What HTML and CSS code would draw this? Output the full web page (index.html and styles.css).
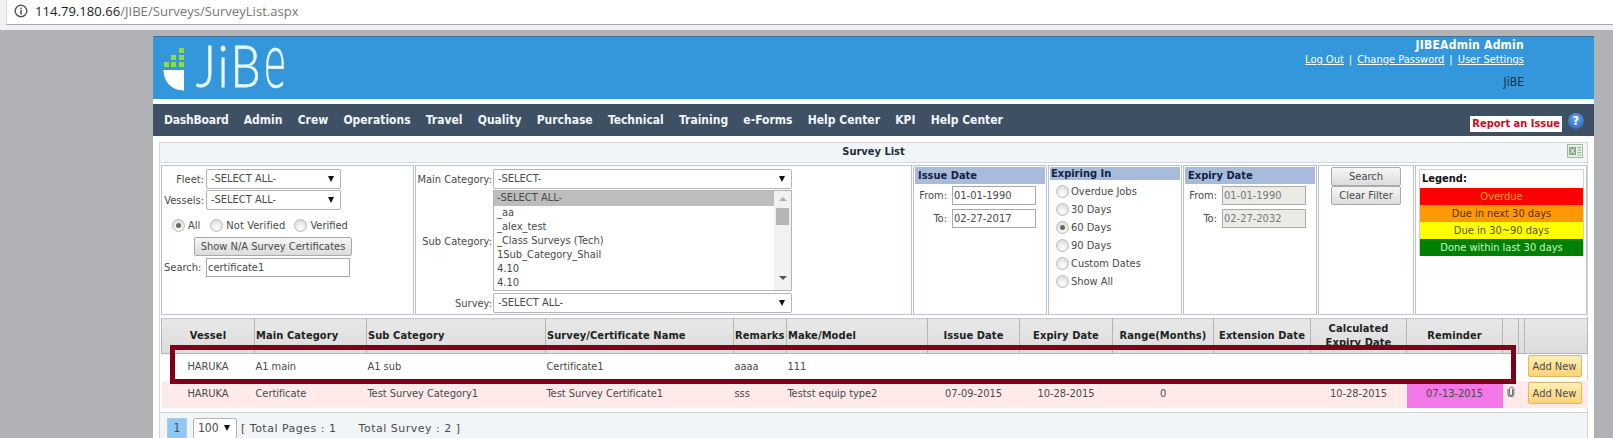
FILE: index.html
```html
<!DOCTYPE html>
<html>
<head>
    <meta charset="UTF-8">
    <title>Survey List</title>
    <link rel="stylesheet" href="styles.css">
</head>
<body>
    <div class="topbar">
        <div class="url">
            <svg class="info" width="14" height="14" viewBox="0 0 14 14"><circle cx="7" cy="7" r="5.8" fill="none" stroke="#555" stroke-width="1.4"/><rect x="6.2" y="6" width="1.6" height="4.4" fill="#555"/><rect x="6.2" y="3.6" width="1.6" height="1.6" fill="#555"/></svg>
            <span class="host">114.79.180.66</span><span class="path">/JIBE/Surveys/SurveyList.aspx</span>
        </div>
    </div>

    <div class="page">
        <div class="header">
            <div class="brand">
                <svg class="ship" width="22" height="44" viewBox="0 0 22 44">
                    <rect x="16" y="1" width="5" height="5" fill="#8fdc3c"/>
                    <rect x="8" y="8" width="5" height="5" fill="#8fdc3c"/>
                    <rect x="16" y="8" width="5" height="5" fill="#8fdc3c"/>
                    <rect x="1" y="15" width="5" height="5" fill="#8fdc3c"/>
                    <rect x="8" y="15" width="5" height="5" fill="#8fdc3c"/>
                    <rect x="16" y="15" width="5" height="5" fill="#8fdc3c"/>
                    <path d="M0.5 23H21V43.5C9 43.5 0.5 35 0.5 23Z" fill="#fff"/>
                </svg>
                <span class="logo">JiB<span class="logo-e">e</span></span>
            </div>
            <div class="user">
                <div class="user-name">JIBEAdmin Admin</div>
                <div class="user-links"><a href="#">Log Out</a><i>|</i><a href="#">Change Password</a><i>|</i><a href="#">User Settings</a></div>
                <div class="user-co">JiBE</div>
            </div>
        </div>

        <div class="nav">
            <ul class="menu">
                <li>DashBoard</li>
                <li>Admin</li>
                <li>Crew</li>
                <li>Operations</li>
                <li>Travel</li>
                <li>Quality</li>
                <li>Purchase</li>
                <li>Technical</li>
                <li>Training</li>
                <li>e-Forms</li>
                <li>Help Center</li>
                <li>KPI</li>
                <li>Help Center</li>
            </ul>
            <div class="nav-right">
                <span class="report">Report an Issue</span>
                <span class="help">?</span>
            </div>
        </div>

        <div class="content">
            <div class="title">
                <span>Survey List</span>
                <svg class="excel" width="16" height="14" viewBox="0 0 16 14"><rect x="0.5" y="0.5" width="15" height="13" fill="#e8efe4" stroke="#a3b8a3"/><rect x="2" y="3" width="7" height="8" fill="#7fa87f"/><path d="M3.5 4.5l4 5M7.5 4.5l-4 5" stroke="#fff" stroke-width="1"/><path d="M10.5 3.5h3.5M10.5 6h3.5M10.5 8.5h3.5M10.5 11h3.5" stroke="#93b393"/></svg>
            </div>

            <div class="filters">
                <div class="panel p-fleet">
                    <div class="row"><label class="lbl-a">Fleet:</label><div class="select s135">-SELECT ALL-<b></b></div></div>
                    <div class="row"><label class="lbl-a">Vessels:</label><div class="select s135">-SELECT ALL-<b></b></div></div>
                    <div class="verify">
                        <span class="radio on"></span><span class="opt">All</span>
                        <span class="radio"></span><span class="opt opt-wide">Not Verified</span>
                        <span class="radio"></span><span>Verified</span>
                    </div>
                    <button class="btn btn-na">Show N/A Survey Certificates</button>
                    <div class="row"><label class="lbl-s">Search:</label><input class="txt s144" value="certificate1"></div>
                </div>

                <div class="panel p-cat">
                    <label>Main Category:</label>
                    <div class="select">-SELECT-<b></b></div>
                    <label>Sub Category:</label>
                    <div class="list">
                        <ul>
                            <li class="sel">-SELECT ALL-</li>
                            <li>_aa</li>
                            <li>_alex_test</li>
                            <li>_Class Surveys (Tech)</li>
                            <li>1Sub_Category_Shail</li>
                            <li>4.10</li>
                            <li>4.10</li>
                        </ul>
                        <div class="scroll"><span class="up"></span><span class="thumb"></span><span class="down"></span></div>
                    </div>
                    <label>Survey:</label>
                    <div class="select">-SELECT ALL-<b></b></div>
                </div>

                <div class="panel p-date">
                    <div class="head">Issue Date</div>
                    <div class="drow"><label>From:</label><input class="txt date" value="01-01-1990"></div>
                    <div class="drow"><label>To:</label><input class="txt date" value="02-27-2017"></div>
                </div>

                <div class="panel p-exp">
                    <div class="head short">Expiring In</div>
                    <div class="erow"><span class="radio"></span>Overdue Jobs</div>
                    <div class="erow"><span class="radio"></span>30 Days</div>
                    <div class="erow"><span class="radio on"></span>60 Days</div>
                    <div class="erow"><span class="radio"></span>90 Days</div>
                    <div class="erow"><span class="radio"></span>Custom Dates</div>
                    <div class="erow"><span class="radio"></span>Show All</div>
                </div>

                <div class="panel p-date">
                    <div class="head">Expiry Date</div>
                    <div class="drow"><label>From:</label><input class="txt date off" value="01-01-1990"></div>
                    <div class="drow"><label>To:</label><input class="txt date off" value="02-27-2032"></div>
                </div>

                <div class="panel p-btns">
                    <button class="btn">Search</button>
                    <button class="btn">Clear Filter</button>
                </div>

                <div class="panel p-legend">
                    <div class="legend">
                        <div class="legend-t">Legend:</div>
                        <div class="lg red">Overdue</div>
                        <div class="lg orange">Due in next 30 days</div>
                        <div class="lg yellow">Due in 30~90 days</div>
                        <div class="lg green">Done within last 30 days</div>
                    </div>
                </div>
            </div>

            <table class="grid">
                <colgroup>
                    <col style="width:93px"><col style="width:112px"><col style="width:179px"><col style="width:188px">
                    <col style="width:53px"><col style="width:141px"><col style="width:92px"><col style="width:93px">
                    <col style="width:101px"><col style="width:97px"><col style="width:96px"><col style="width:96px">
                    <col style="width:16px"><col style="width:6px"><col style="width:63px">
                </colgroup>
                <thead>
                    <tr>
                        <th class="c">Vessel</th>
                        <th>Main Category</th>
                        <th>Sub Category</th>
                        <th>Survey/Certificate Name</th>
                        <th>Remarks</th>
                        <th>Make/Model</th>
                        <th class="c">Issue Date</th>
                        <th class="c">Expiry Date</th>
                        <th class="c">Range(Months)</th>
                        <th class="c">Extension Date</th>
                        <th class="c">Calculated Expiry Date</th>
                        <th class="c">Reminder</th>
                        <th></th>
                        <th></th>
                        <th></th>
                    </tr>
                </thead>
                <tbody>
                    <tr>
                        <td class="c">HARUKA</td>
                        <td>A1 main</td>
                        <td>A1 sub</td>
                        <td>Certificate1</td>
                        <td>aaaa</td>
                        <td>111</td>
                        <td></td><td></td><td></td><td></td><td></td><td></td><td></td><td></td>
                        <td class="act"><button class="add">Add New</button></td>
                    </tr>
                    <tr class="pink">
                        <td class="c">HARUKA</td>
                        <td>Certificate</td>
                        <td>Test Survey Category1</td>
                        <td>Test Survey Certificate1</td>
                        <td>sss</td>
                        <td>Testst equip type2</td>
                        <td class="c">07-09-2015</td>
                        <td class="c">10-28-2015</td>
                        <td class="c">0</td>
                        <td></td>
                        <td class="c">10-28-2015</td>
                        <td class="c remind">07-13-2015</td>
                        <td class="clip"><svg width="8" height="11" viewBox="0 0 8 11"><path d="M5.6 3v5a1.6 1.6 0 0 1-3.2 0V2.6a2.4 2.4 0 0 1 4.4 0V8a2.9 2.9 0 0 1-5.8 0V3" fill="none" stroke="#5a6a7a" stroke-width="1"/></svg></td>
                        <td></td>
                        <td class="act"><button class="add">Add New</button></td>
                    </tr>
                </tbody>
            </table>

            <div class="pager">
                <span class="pg">1</span>
                <div class="select pg-size">100<b></b></div>
                <span class="pg-text">[ Total Pages : 1<span class="pg-gap">Total Survey : 2 ]</span></span>
            </div>

            <div class="mark"></div>
        </div>
    </div>
</body>
</html>
```

FILE: styles.css
```css
html, body {
    height: 438px;
    overflow: hidden;
}
body {
    margin: 0;
    background-color: #b1b2b6;
    font-family: "DejaVu Sans Condensed", "DejaVu Sans", sans-serif;
    font-size: 11px;
    color: #4a4a4a;
}
ul {
    list-style: none;
    margin: 0;
    padding: 0;
}

/* browser address bar */
.topbar {
    height: 30px;
    box-sizing: border-box;
    background-color: #f1f1f4;
    padding-left: 6px;
}
.url {
    height: 25px;
    box-sizing: border-box;
    background-color: #fff;
    border-bottom: 1px solid #a9a9ad;
    border-left: 1px solid #d8d8da;
    display: flex;
    align-items: center;
    padding: 0 0 2px 7px;
    font-family: "Open Sans", sans-serif;
    font-size: 13.1px;
}
.info {
    margin-right: 7px;
}
.host {
    color: #222;
}
.path {
    color: #777;
}

/* page */
.page {
    margin: 6px 0 0 153px;
    width: 1441px;
    background-color: #fff;
    height: 402px;
}
.header {
    height: 63px;
    box-sizing: border-box;
    background-color: #3497db;
    border-top: 1px solid #3f6f96;
    display: flex;
    justify-content: space-between;
    padding-right: 70px;
}
.brand {
    display: flex;
    align-items: flex-start;
    padding: 9px 0 0 10px;
}
.ship {
    margin-top: 1px;
}
.logo {
    margin: -3px 0 0 11px;
    font-family: Lato, sans-serif;
    font-weight: 300;
    font-size: 58px;
    line-height: 44px;
    color: #e8f8fd;
    -webkit-text-stroke: 0.8px #e8f8fd;
    letter-spacing: 3px;
    display: inline-block;
    transform: scaleX(0.82);
    transform-origin: left center;
}
/* the logo's e stands as tall as the capitals */
.logo-e {
    display: inline-block;
    font-family: "DejaVu Sans", sans-serif;
    font-weight: 200;
    font-size: 70px;
    line-height: 30px;
    letter-spacing: 0;
    transform: scaleX(0.66);
    transform-origin: left center;
    -webkit-text-stroke: 0.5px #e8f8fd;
}
.user {
    text-align: right;
    color: #fff;
    font-size: 11px;
}
.user-name {
    font-weight: bold;
    font-size: 12px;
    letter-spacing: 0.25px;
    margin-top: 1px;
    line-height: 14px;
}
.user-links {
    margin-top: 1px;
    line-height: 14px;
}
.user-links a {
    color: #fff;
}
.user-links i {
    font-style: normal;
    margin: 0 5px;
}
.user-co {
    color: #14304a;
    font-size: 12px;
    margin-top: 8px;
    line-height: 14px;
}

/* nav */
.nav {
    margin-top: 5px;
    height: 32px;
    background-color: #3d5064;
    display: flex;
    justify-content: space-between;
}
.menu {
    display: flex;
    gap: 15.2px;
    padding: 9px 0 0 11px;
    color: #f2f6f8;
    font-weight: bold;
    font-size: 12px;
    line-height: 15px;
}
.menu li:first-child {
    letter-spacing: -0.2px;
}
.nav-right {
    display: flex;
    align-items: flex-start;
    padding: 9px 10px 0 0;
}
.report {
    margin-top: 3px;
    background-color: #fff;
    color: #cc0a1e;
    font-weight: bold;
    font-size: 11px;
    line-height: 16px;
    padding: 0 2px;
}
.help {
    margin-left: 6px;
    width: 16px;
    height: 16px;
    border-radius: 50%;
    background: radial-gradient(circle at 50% 35%, #6fa5e8, #1f5bb0);
    color: #fff;
    font-weight: bold;
    font-size: 12px;
    line-height: 16px;
    text-align: center;
}

/* content box */
.content {
    position: relative;
    margin: 6px 6px 0;
    border: 1px solid #d5d8da;
    border-bottom: 0;
    padding: 0 1px;
}
.title {
    height: 20px;
    margin: 0 -1px 2px;
    padding-top: 1px;
    box-sizing: border-box;
    background-color: #f2f5f8;
    border-bottom: 1px solid #d5d8da;
    text-align: center;
    font-weight: bold;
    color: #1c2c3c;
    position: relative;
    line-height: 16px;
}
.excel {
    position: absolute;
    right: 4px;
    top: 1px;
}
.filters {
    display: flex;
    gap: 1px;
    height: 150px;
    margin-bottom: 3px;
}
.panel {
    border: 1px solid #b9c3d2;
    box-sizing: border-box;
    flex: none;
}

/* form controls */
.select {
    height: 20px;
    box-sizing: border-box;
    border: 1px solid #b4b4b4;
    border-radius: 2px;
    background-color: #fff;
    line-height: 18px;
    padding-left: 4px;
    position: relative;
}
.select b {
    position: absolute;
    right: 6px;
    top: 6px;
    border-left: 3.5px solid transparent;
    border-right: 3.5px solid transparent;
    border-top: 6px solid #111;
}
.txt {
    height: 19px;
    box-sizing: border-box;
    border: 1px solid #aaa;
    padding: 0 1px;
    margin: 0;
    font-family: inherit;
    font-size: 11px;
    color: #4a4a4a;
    background-color: #fff;
}
.btn {
    display: block;
    padding: 0;
    height: 19px;
    border: 1px solid #aaa;
    border-radius: 2px;
    background: linear-gradient(#f6f6f6, #dcdcdc);
    font-family: inherit;
    font-size: 11px;
    color: #4a4a4a;
}
.radio {
    flex: none;
    display: inline-block;
    width: 11px;
    height: 11px;
    border-radius: 50%;
    border: 1px solid #bbb;
    background: radial-gradient(circle at 50% 70%, #fff, #d4d4d4);
    position: relative;
}
.radio.on::after {
    content: "";
    position: absolute;
    left: 3px;
    top: 3px;
    width: 5px;
    height: 5px;
    border-radius: 50%;
    background-color: #666;
}

/* fleet panel */
.p-fleet {
    width: 253px;
    padding-top: 3px;
}
.row {
    display: flex;
    align-items: center;
    margin-bottom: 1px;
}
.lbl-a {
    width: 42px;
    margin-right: 2px;
    text-align: right;
}
.lbl-s {
    width: 41px;
    margin: 0 1px 0 2px;
}
.s135 {
    width: 135px;
}
.s144 {
    width: 144px;
    height: 19px;
}
.verify {
    display: flex;
    align-items: center;
    height: 26px;
    padding: 2px 0 0 10px;
    box-sizing: border-box;
}
.verify .radio {
    margin-right: 3px;
}
.opt {
    margin-right: 10px;
}
.opt-wide {
    margin-right: 9px;
    letter-spacing: 0.1px;
}
.btn-na {
    margin: 0 0 2px 32px;
    width: 158px;
}

/* category panel */
.p-cat {
    width: 497px;
    padding: 3px 0 0 0;
    display: grid;
    grid-template-columns: 76px 299px;
    grid-template-rows: 20px 102px 20px;
    column-gap: 1px;
    row-gap: 1px;
    align-items: center;
    align-content: start;
}
.p-cat label {
    text-align: right;
}
.list {
    height: 101px;
    align-self: start;
    box-sizing: border-box;
    border: 1px solid #b4b4b4;
    display: flex;
    overflow: hidden;
}
.list ul {
    flex: 1;
}
.list li {
    height: 14px;
    line-height: 14px;
    padding-left: 3px;
}
.list li.sel {
    height: 15px;
    background-color: #bdbdbd;
}
.scroll {
    width: 17px;
    background-color: #f1f1f1;
    display: flex;
    flex-direction: column;
    align-items: center;
    position: relative;
}
.up, .down {
    border-left: 4px solid transparent;
    border-right: 4px solid transparent;
}
.up {
    margin-top: 6px;
    border-bottom: 4px solid #b0b0b0;
}
.down {
    margin-top: 51px;
    border-top: 4px solid #555;
}
.thumb {
    margin-top: 7px;
    width: 13px;
    height: 17px;
    background-color: #b5b5b5;
}

/* date panels */
.p-date {
    width: 134px;
    padding: 1px;
}
.head {
    height: 17px;
    background-color: #a9bbdc;
    color: #13233f;
    font-weight: bold;
    line-height: 17px;
    padding-left: 3px;
    margin-bottom: 2px;
}
.head.short {
    height: 13px;
    line-height: 13px;
    padding-left: 1px;
    margin-bottom: 2px;
}
.drow {
    display: flex;
    align-items: center;
    margin-bottom: 4px;
}
.drow label {
    width: 32px;
    margin-right: 5px;
    text-align: right;
}
.date {
    width: 84px;
}
.date.off {
    background-color: #ebebe6;
    color: #777;
}
.p-exp {
    width: 134px;
    padding: 1px;
}
.erow {
    height: 18px;
    display: flex;
    align-items: center;
    padding-left: 6px;
    gap: 2px;
}

/* buttons and legend */
.p-btns {
    width: 96px;
    padding: 1px 0 0 12px;
}
.p-btns .btn {
    width: 70px;
    height: 19px;
}
.p-legend {
    width: 172px;
    padding: 3px 3px 0;
}
.legend {
    border: 1px solid #d0d0d0;
    border-bottom: 0;
    width: 165px;
    box-sizing: border-box;
    margin-left: 0;
}
.legend-t {
    height: 18px;
    line-height: 18px;
    padding-left: 2px;
    font-weight: bold;
    color: #111;
}
.lg {
    height: 17px;
    line-height: 17px;
    text-align: center;
}
.red {
    background-color: #ff0000;
    color: #ffa52a;
}
.orange {
    background-color: #ff9900;
    color: #5c2a00;
}
.yellow {
    background-color: #ffff00;
    color: #555500;
}
.green {
    background-color: #008000;
    color: #c8f5c8;
}

/* grid */
.grid {
    width: 1426px;
    table-layout: fixed;
    border-collapse: collapse;
}
.grid th {
    height: 35px;
    padding: 0 0 0 1px;
    box-sizing: border-box;
    background: linear-gradient(#e8e8e8, #dcdcdc);
    border: 1px solid #b5b5b5;
    border-top-color: #c8ccd0;
    text-align: left;
    font-size: 11px;
    letter-spacing: 0.1px;
    color: #222;
    line-height: 14px;
    overflow: hidden;
}
.grid td {
    height: 27px;
    padding: 0 0 2px 1px;
    box-sizing: border-box;
    white-space: nowrap;
    letter-spacing: -0.05px;
}
.grid th.c, .grid td.c {
    text-align: center;
    padding-left: 0;
}
.pink td {
    background-color: #ffeaea;
}
.grid td.remind {
    background-color: #f277e8;
}
.clip {
    text-align: center;
}
.grid td.act {
    padding: 0 0 2px 3px;
}
.add {
    width: 54px;
    height: 22px;
    padding: 0;
    border: 1px solid #e3b768;
    border-radius: 2px;
    background: linear-gradient(#ffefb8, #ffd273);
    font-family: inherit;
    font-size: 11px;
    color: #4a4a4a;
}
.pager {
    margin: 4px -1px 0;
    height: 28px;
    background-color: #f2f5f8;
    border-top: 1px solid #d0d3d6;
    display: flex;
    align-items: center;
    padding: 5px 0 0 7px;
    box-sizing: border-box;
}
.pg {
    width: 20px;
    height: 21px;
    box-sizing: border-box;
    border: 1px solid #b0cbe0;
    background-color: #8ec8f5;
    text-align: center;
    line-height: 19px;
    font-size: 12px;
}
.pg-size {
    width: 44px;
    height: 21px;
    margin: 0 4px 0 6px;
    font-size: 12px;
}
.pg-text {
    font-family: "DejaVu Sans", sans-serif;
    font-size: 11px;
    letter-spacing: 0.5px;
}
.pg-gap {
    margin-left: 22px;
}

/* red highlight drawn over the first row */
.mark {
    position: absolute;
    left: 10px;
    top: 202px;
    width: 1346px;
    height: 39px;
    box-sizing: border-box;
    border: 5px solid #7e0018;
}
```
